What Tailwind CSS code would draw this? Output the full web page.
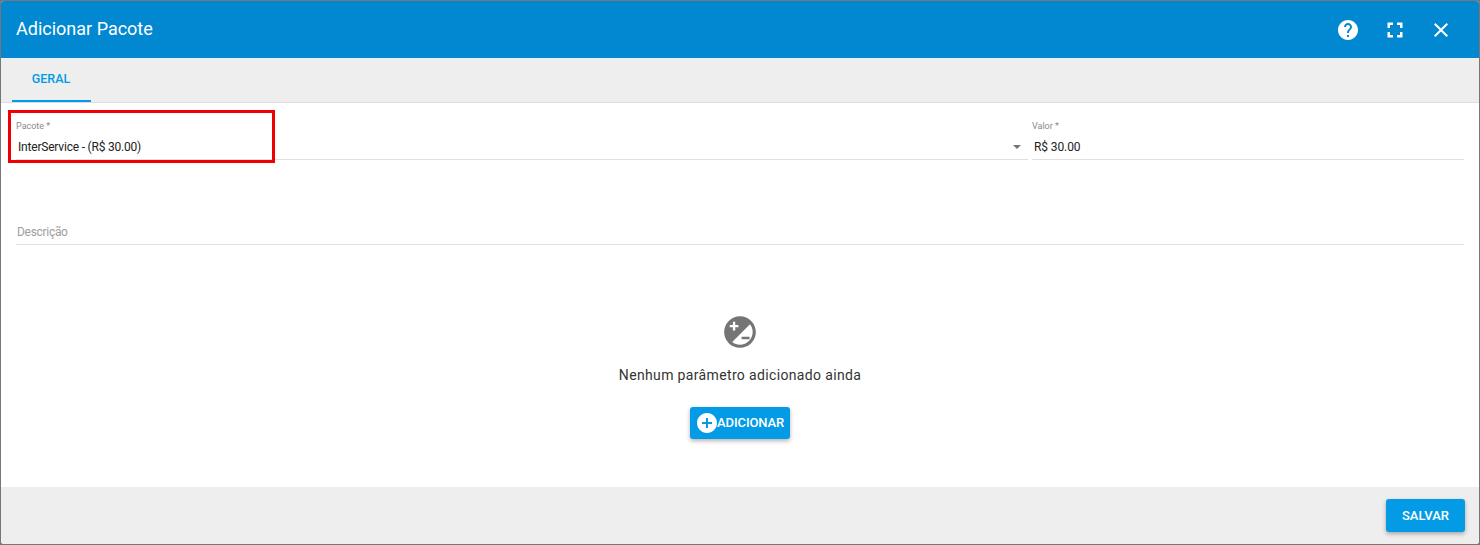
<!DOCTYPE html>
<html lang="pt">
<head>
<meta charset="utf-8">
<script src="https://cdn.jsdelivr.net/npm/@tailwindcss/browser@4"></script>
</head>
<body class="bg-[#777] font-['Roboto',sans-serif]">
<div class="relative w-[1480px] h-[545px] overflow-hidden">
  <div class="m-[1px] h-[543px] w-[1478px] flex flex-col bg-white rounded-[3px] overflow-hidden">
    <header class="h-[57px] shrink-0 bg-[#0288d1] flex items-center justify-between pl-[15px] pb-[1px] text-white">
      <h1 class="text-[18px] font-normal leading-none">Adicionar Pacote</h1>
      <div class="flex items-center gap-[22px] pr-[26px] pt-[1px]">
        <svg class="w-[24px] h-[24px] mr-[1px]" viewBox="0 0 24 24" fill="#fff"><path d="M12 2C6.48 2 2 6.48 2 12s4.48 10 10 10 10-4.48 10-10S17.52 2 12 2zm1 17h-2v-2h2v2zm2.07-7.75-.9.92C13.45 12.9 13 13.5 13 15h-2v-.5c0-1.1.45-2.1 1.17-2.83l1.24-1.26c.37-.36.59-.86.59-1.41 0-1.1-.9-2-2-2s-2 .9-2 2H8c0-2.21 1.79-4 4-4s4 1.79 4 4c0 .88-.36 1.68-.93 2.25z"/></svg>
        <svg class="w-[24px] h-[24px]" viewBox="0 0 24 24" fill="#fff"><path d="M7 14H4.5v5.500h5.500V17H7v-3zM4.500 10H7V7h3V4.500H4.500V10zM17 17h-3v2.500h5.500V14H17v3zM14 4.500V7h3v3h2.500V4.500H14z"/></svg>
        <svg class="w-[24px] h-[24px]" viewBox="0 0 24 24" fill="#fff"><path d="M19 6.410 17.590 5 12 10.590 6.410 5 5 6.410 10.590 12 5 17.590 6.410 19 12 13.410 17.590 19 19 17.590 13.410 12z"/></svg>
      </div>
    </header>
    <nav class="h-[45px] shrink-0 bg-[#eeeeee] border-b border-[#dddddd] pl-[11px] flex">
      <div class="w-[79px] h-[44px] border-b-2 border-[#039be5] flex items-center justify-center text-[#039be5] text-[12.5px] font-medium tracking-[0.05px] pr-[1px]">GERAL</div>
    </nav>
    <main class="flex-1 px-[15px] flex flex-col">
      <div class="flex gap-[4px] pt-[17px] h-[57px]">
        <div class="w-[1012px] border-b border-[#e0e0e0]">
          <div class="text-[9px] leading-[12px] text-[#8a8a8a]">Pacote *</div>
          <div class="flex justify-between items-center pl-[2px] pr-[7px] mt-[5px] h-[20px] text-[12px] tracking-[-0.2px] text-[#222]">
            <span>InterService - (R$ 30.00)</span>
            <span class="w-0 h-0 border-x-[4px] border-x-transparent border-t-[4px] border-t-[#757575]"></span>
          </div>
        </div>
        <div class="flex-1 border-b border-[#e0e0e0]">
          <div class="text-[9px] leading-[12px] text-[#8a8a8a]">Valor *</div>
          <div class="flex items-center pl-[2px] mt-[5px] h-[20px] text-[12px] tracking-[-0.1px] text-[#222]">R$ 30.00</div>
        </div>
      </div>
      <div class="mt-[63px] h-[22px] pl-[1px] border-b border-[#e0e0e0] text-[12px] leading-[18px] tracking-[-0.3px] text-[#9e9e9e]">Descrição</div>
      <div class="flex flex-col items-center mt-[68px]">
        <svg class="w-[38px] h-[38px]" viewBox="0 0 24 24" fill="#757575"><path d="M12 2C6.470 2 2 6.470 2 12s4.470 10 10 10 10-4.470 10-10S17.530 2 12 2zM5.500 7.500h2v-2H9v2h2V9H9v2H7.500V9h-2V7.500zM12 20c-1.850 0-3.550-.63-4.900-1.690L18.310 7.100C19.370 8.450 20 10.150 20 12c0 4.410-3.590 8-8 8zm1-3.500h5V15h-5v1.500z"/></svg>
        <p class="mt-[14px] text-[14px] leading-[20px] tracking-[0.35px] text-[#333]">Nenhum parâmetro adicionado ainda</p>
        <button class="mt-[22px] w-[100px] h-[32px] bg-[#039be5] rounded-[3px] shadow-[0_2px_4px_rgba(0,0,0,0.3)] flex items-center pl-[7px] text-white text-[13px] font-medium tracking-[-0.1px]">
          <svg class="w-[20px] h-[20px] shrink-0" viewBox="2 2 20 20" fill="#fff"><path d="M12 2C6.480 2 2 6.480 2 12s4.480 10 10 10 10-4.480 10-10S17.520 2 12 2zm5 11h-4v4h-2v-4H7v-2h4V7h2v4h4v2z"/></svg>
          <span>ADICIONAR</span>
        </button>
      </div>
    </main>
    <footer class="h-[57px] shrink-0 bg-[#eeeeee] flex items-start justify-end pr-[14px] pt-[12px]">
      <button class="w-[79px] h-[33px] bg-[#039be5] rounded-[3px] shadow-[0_2px_4px_rgba(0,0,0,0.3)] text-white text-[13px] font-medium">SALVAR</button>
    </footer>
  </div>
  <div class="absolute left-[8px] top-[110px] w-[267px] h-[53px] border-[3px] border-[#f00000]"></div>
</div>
</body>
</html>
